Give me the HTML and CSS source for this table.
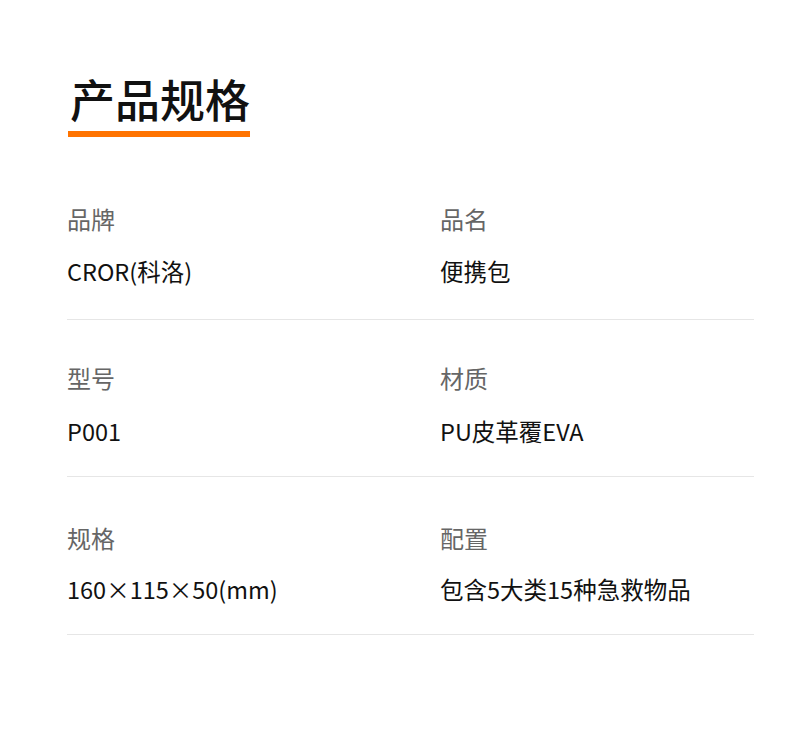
FILE: index.html
```html
<!DOCTYPE html>
<html lang="zh">
<head>
<meta charset="utf-8">
<link rel="stylesheet" href="styles.css">
</head>
<body>
<div class="page">
  <h1 class="title"><span class="title-text">产品规格</span></h1>
  <div class="specs">
    <div class="row row-1">
      <div class="cell"><div class="label">品牌</div><div class="value">CROR(科洛)</div></div>
      <div class="cell"><div class="label">品名</div><div class="value">便携包</div></div>
    </div>
    <div class="row row-2">
      <div class="cell"><div class="label">型号</div><div class="value">P001</div></div>
      <div class="cell"><div class="label">材质</div><div class="value">PU皮革覆EVA</div></div>
    </div>
    <div class="row row-3">
      <div class="cell"><div class="label">规格</div><div class="value">160×115×50(mm)</div></div>
      <div class="cell"><div class="label">配置</div><div class="value">包含5大类15种急救物品</div></div>
    </div>
  </div>
</div>
</body>
</html>
```
FILE: styles.css
```css
html, body {
  margin: 0;
  padding: 0;
  background: #ffffff;
}
body {
  font-family: "Noto Sans CJK SC", "Noto Sans", sans-serif;
  color: #111;
}
.page {
  padding: 72px 36px 0 67px;
}
.title {
  margin: 0 0 0 1px;
  font-size: 45px;
  font-weight: 500;
  line-height: 54px;
  height: 65px;
}
.title-text {
  display: inline-block;
  padding-left: 2px;
  padding-bottom: 5px;
  border-bottom: 6px solid #ff7300;
}
.specs {
  margin-top: 25px;
}
.row {
  display: grid;
  grid-template-columns: 373px 1fr;
  border-bottom: 1px solid #e6e6e6;
}
.row-1 { padding: 42px 0 33px; }
.row-1 .value { margin-top: 22px; }
.row-2 { padding: 43px 0 30px; }
.row-2 .value { margin-top: 23px; }
.row-3 { padding: 46px 0 30px; }
.row-3 .value { margin-top: 21px; }
.label {
  font-size: 24px;
  line-height: 30px;
  color: #666;
}
.value {
  font-size: 23.5px;
  line-height: 30px;
  color: #111;
}
```
